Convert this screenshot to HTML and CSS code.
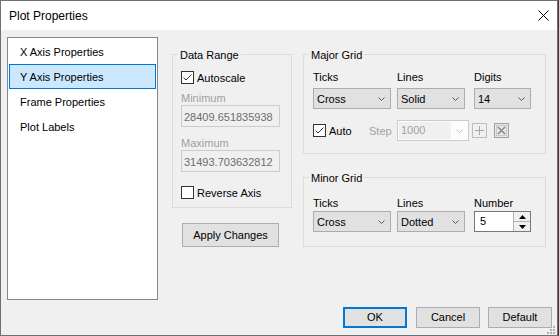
FILE: index.html
```html
<!DOCTYPE html>
<html>
<head>
  <meta charset="utf8" />
  <title>Plot Properties</title>
  <link rel="stylesheet" href="styles.css">
</head>
<body>
  <div class="window">
    <div class="titlebar">
      <span class="title">Plot Properties</span>
      <span class="close">
        <svg width="11" height="11" viewBox="0 0 11 11"><path d="M0.5 0.5L10.5 10.5M10.5 0.5L0.5 10.5" stroke="#000" stroke-width="1"/></svg>
      </span>
    </div>
    <div class="content">
      <div class="main">
        <ul class="nav">
          <li>X Axis Properties</li>
          <li class="selected">Y Axis Properties</li>
          <li>Frame Properties</li>
          <li>Plot Labels</li>
        </ul>

        <div class="range-col">
          <div class="group range">
            <span class="group-title">Data Range</span>
            <div class="check">
              <span class="box"><svg width="11" height="11" viewBox="0 0 11 11"><path d="M1.5 5.5L4 8L9.5 2.5" fill="none" stroke="#333" stroke-width="1"/></svg></span>Autoscale
            </div>
            <div class="field-label">Minimum</div>
            <div class="textbox">28409.651835938</div>
            <div class="field-label max">Maximum</div>
            <div class="textbox">31493.703632812</div>
            <div class="check reverse">
              <span class="box"></span>Reverse Axis
            </div>
          </div>
          <div class="btn apply">Apply Changes</div>
        </div>

        <div class="grid-col">
          <div class="group major">
            <span class="group-title">Major Grid</span>
            <div class="fields">
              <div class="field f-ticks">
                <span class="lbl">Ticks</span>
                <div class="combo"><span>Cross</span><svg class="chev" width="7" height="4" viewBox="0 0 7 4"><path d="M0.5 0.5L3.5 3.5L6.5 0.5" fill="none" stroke="#5a5a5a"/></svg></div>
              </div>
              <div class="field f-lines">
                <span class="lbl">Lines</span>
                <div class="combo"><span>Solid</span><svg class="chev" width="7" height="4" viewBox="0 0 7 4"><path d="M0.5 0.5L3.5 3.5L6.5 0.5" fill="none" stroke="#5a5a5a"/></svg></div>
              </div>
              <div class="field f-digits">
                <span class="lbl">Digits</span>
                <div class="combo"><span>14</span><svg class="chev" width="7" height="4" viewBox="0 0 7 4"><path d="M0.5 0.5L3.5 3.5L6.5 0.5" fill="none" stroke="#5a5a5a"/></svg></div>
              </div>
            </div>
            <div class="auto-row">
              <div class="check auto">
                <span class="box"><svg width="11" height="11" viewBox="0 0 11 11"><path d="M1.5 5.5L4 8L9.5 2.5" fill="none" stroke="#333" stroke-width="1"/></svg></span>Auto
              </div>
              <span class="step-lbl">Step</span>
              <div class="step-combo">
                <span class="step-val">1000</span>
                <svg class="chev" width="7" height="4" viewBox="0 0 7 4"><path d="M0.5 0.5L3.5 3.5L6.5 0.5" fill="none" stroke="#c4c4c4"/></svg>
              </div>
              <span class="mini plus">
                <svg width="15" height="15" viewBox="0 0 15 15"><rect x="0.5" y="0.5" width="14" height="14" fill="#f0f0f0" stroke="#bdbdbd"/><path d="M7.5 3V12M3 7.5H12" stroke="#a8a8a8"/></svg>
              </span>
              <span class="mini del">
                <svg width="15" height="15" viewBox="0 0 15 15"><rect x="0.5" y="0.5" width="14" height="14" fill="#e8e8e8" stroke="#a0a0a0"/><rect x="2.5" y="2.5" width="10" height="10" fill="none" stroke="#c8c8c8"/><path d="M4 4L11 11M11 4L4 11" stroke="#8a8a8a" stroke-width="1.6"/></svg>
              </span>
            </div>
          </div>

          <div class="group minor">
            <span class="group-title">Minor Grid</span>
            <div class="fields">
              <div class="field f-ticks">
                <span class="lbl">Ticks</span>
                <div class="combo"><span>Cross</span><svg class="chev" width="7" height="4" viewBox="0 0 7 4"><path d="M0.5 0.5L3.5 3.5L6.5 0.5" fill="none" stroke="#5a5a5a"/></svg></div>
              </div>
              <div class="field f-lines">
                <span class="lbl">Lines</span>
                <div class="combo"><span>Dotted</span><svg class="chev" width="7" height="4" viewBox="0 0 7 4"><path d="M0.5 0.5L3.5 3.5L6.5 0.5" fill="none" stroke="#5a5a5a"/></svg></div>
              </div>
              <div class="field f-digits">
                <span class="lbl">Number</span>
                <div class="spin">
                  <span class="spin-val">5</span>
                  <div class="spin-btns">
                    <span class="spin-up"><svg width="7" height="4" viewBox="0 0 7 4"><path d="M0 4L3.5 0L7 4Z" fill="#000"/></svg></span>
                    <span class="spin-down"><svg width="7" height="4" viewBox="0 0 7 4"><path d="M0 0L3.5 4L7 0Z" fill="#000"/></svg></span>
                  </div>
                </div>
              </div>
            </div>
          </div>
        </div>
      </div>

      <div class="buttons">
        <div class="btn ok">OK</div>
        <div class="btn cancel">Cancel</div>
        <div class="btn">Default</div>
      </div>
    </div>
    <svg class="grip" width="9" height="9" viewBox="0 0 9 9">
      <rect x="6" y="0" width="2" height="2" fill="#b4b4b4"/>
      <rect x="3" y="3" width="2" height="2" fill="#b4b4b4"/>
      <rect x="6" y="3" width="2" height="2" fill="#b4b4b4"/>
      <rect x="0" y="6" width="2" height="2" fill="#b4b4b4"/>
      <rect x="3" y="6" width="2" height="2" fill="#b4b4b4"/>
      <rect x="6" y="6" width="2" height="2" fill="#b4b4b4"/>
    </svg>
  </div>
</body>
</html>
```
FILE: styles.css
```css
body{
  margin: 0;
  background: #3a3a3a;
  font-family: "Liberation Sans", Arial, sans-serif;
  font-size: 11px;
  color: #000;
}
.window{
  position: relative;
  width: 558px;
  height: 336px;
  box-sizing: border-box;
  border: 1px solid #707070;
  background: #f0f0f0;
  display: flex;
  flex-direction: column;
}
.titlebar{
  height: 29px;
  flex-shrink: 0;
  background: #fff;
  display: flex;
  align-items: center;
  padding-left: 8px;
}
.title{
  font-size: 12px;
}
.close{
  margin-left: auto;
  margin-right: 8px;
  width: 11px;
  height: 11px;
  display: flex;
}
.content{
  flex: 1;
  padding: 7px 0 0 6px;
}
.main{
  display: flex;
  align-items: flex-start;
  height: 263px;
}

/* left list */
.nav{
  list-style: none;
  margin: 0;
  padding: 1px;
  width: 151px;
  height: 263px;
  box-sizing: border-box;
  border: 1px solid #828790;
  background: #fff;
}
.nav li{
  height: 25px;
  box-sizing: border-box;
  border: 1px solid transparent;
  padding: 2px 0 0 10px;
  line-height: 21px;
}
.nav li.selected{
  background: #cce8ff;
  border-color: #0078d7;
}

/* group boxes */
.group{
  position: relative;
  box-sizing: border-box;
  border: 1px solid #dcdcdc;
}
.group-title{
  position: absolute;
  top: -7px;
  left: 5px;
  padding: 0 2px;
  line-height: 15px;
  background: #f0f0f0;
}

.range-col{
  margin-left: 14px;
  width: 120px;
  padding-top: 17px;
}
.range{
  height: 154px;
  padding: 16px 0 0 8px;
}
.check{
  display: flex;
  align-items: center;
  height: 13px;
}
.box{
  width: 13px;
  height: 13px;
  box-sizing: border-box;
  border: 1px solid #333;
  background: #fff;
  margin-right: 3px;
  display: flex;
}
.field-label{
  color: #a0a0a0;
  line-height: 14px;
  margin-top: 7px;
}
.field-label.max{
  margin-top: 9px;
}
.textbox{
  width: 99px;
  height: 22px;
  box-sizing: border-box;
  border: 1px solid #cccccc;
  background: #f0f0f0;
  color: #6d6d6d;
  padding: 3px 0 0 2px;
  line-height: 17px;
  overflow: hidden;
  white-space: nowrap;
}
.check.reverse{
  margin-top: 14px;
}

.btn{
  width: 64px;
  height: 21px;
  box-sizing: border-box;
  border: 1px solid #adadad;
  background: #e1e1e1;
  text-align: center;
  line-height: 19px;
}
.btn.apply{
  width: 97px;
  height: 24px;
  line-height: 22px;
  margin: 15px 0 0 10px;
}

/* grid groups */
.grid-col{
  margin-left: 11px;
  width: 243px;
  padding-top: 17px;
}
.major{
  height: 100px;
  padding: 15px 0 0 9px;
}
.minor{
  height: 70px;
  margin-top: 23px;
  padding: 18px 0 0 9px;
}
.fields{
  display: flex;
}
.field{
  display: flex;
  flex-direction: column;
}
.lbl{
  line-height: 15px;
}
.major .combo{
  margin-top: 3px;
}
.f-ticks{
  width: 78px;
  margin-right: 6px;
}
.f-lines{
  width: 68px;
  margin-right: 9px;
}
.f-digits{
  width: 57px;
}
.combo{
  height: 21px;
  box-sizing: border-box;
  border: 1px solid #adadad;
  background: #e1e1e1;
  display: flex;
  align-items: center;
  justify-content: space-between;
  padding: 0 5px 0 3px;
}

.auto-row{
  display: flex;
  align-items: center;
  height: 21px;
  margin-top: 11px;
}
.check.auto{
  width: 56px;
}
.step-lbl{
  width: 28px;
  color: #a0a0a0;
}
.step-combo{
  width: 72px;
  height: 21px;
  box-sizing: border-box;
  border: 1px solid #cccccc;
  background: #fcfcfc;
  display: flex;
  align-items: center;
  padding: 1px 5px 1px 1px;
}
.step-val{
  width: 50px;
  height: 17px;
  line-height: 17px;
  padding-left: 2px;
  background: #f0f0f0;
  color: #a0a0a0;
  margin-right: auto;
}
.mini{
  display: flex;
  width: 15px;
  height: 15px;
}
.mini.plus{
  margin-left: 3px;
}
.mini.del{
  margin-left: 7px;
}

.spin{
  height: 21px;
  box-sizing: border-box;
  border: 1px solid #7a7a7a;
  background: #fff;
  display: flex;
}
.spin-val{
  flex: 1;
  padding-left: 5px;
  line-height: 19px;
}
.spin-btns{
  width: 16px;
  display: flex;
  flex-direction: column;
  border-left: 1px solid #b4b4b4;
  background: #f0f0f0;
}
.spin-up,
.spin-down{
  flex: 1;
  display: flex;
  align-items: center;
  justify-content: center;
}
.spin-up{
  border-bottom: 1px solid #b4b4b4;
}

/* dialog buttons */
.buttons{
  display: flex;
  justify-content: flex-end;
  margin-top: 7px;
  padding-right: 5px;
}
.btn.ok{
  border: 2px solid #0078d7;
  line-height: 17px;
  margin-right: 9px;
}
.btn.cancel{
  margin-right: 8px;
}
.grip{
  position: absolute;
  right: 1px;
  bottom: 0;
}
```
